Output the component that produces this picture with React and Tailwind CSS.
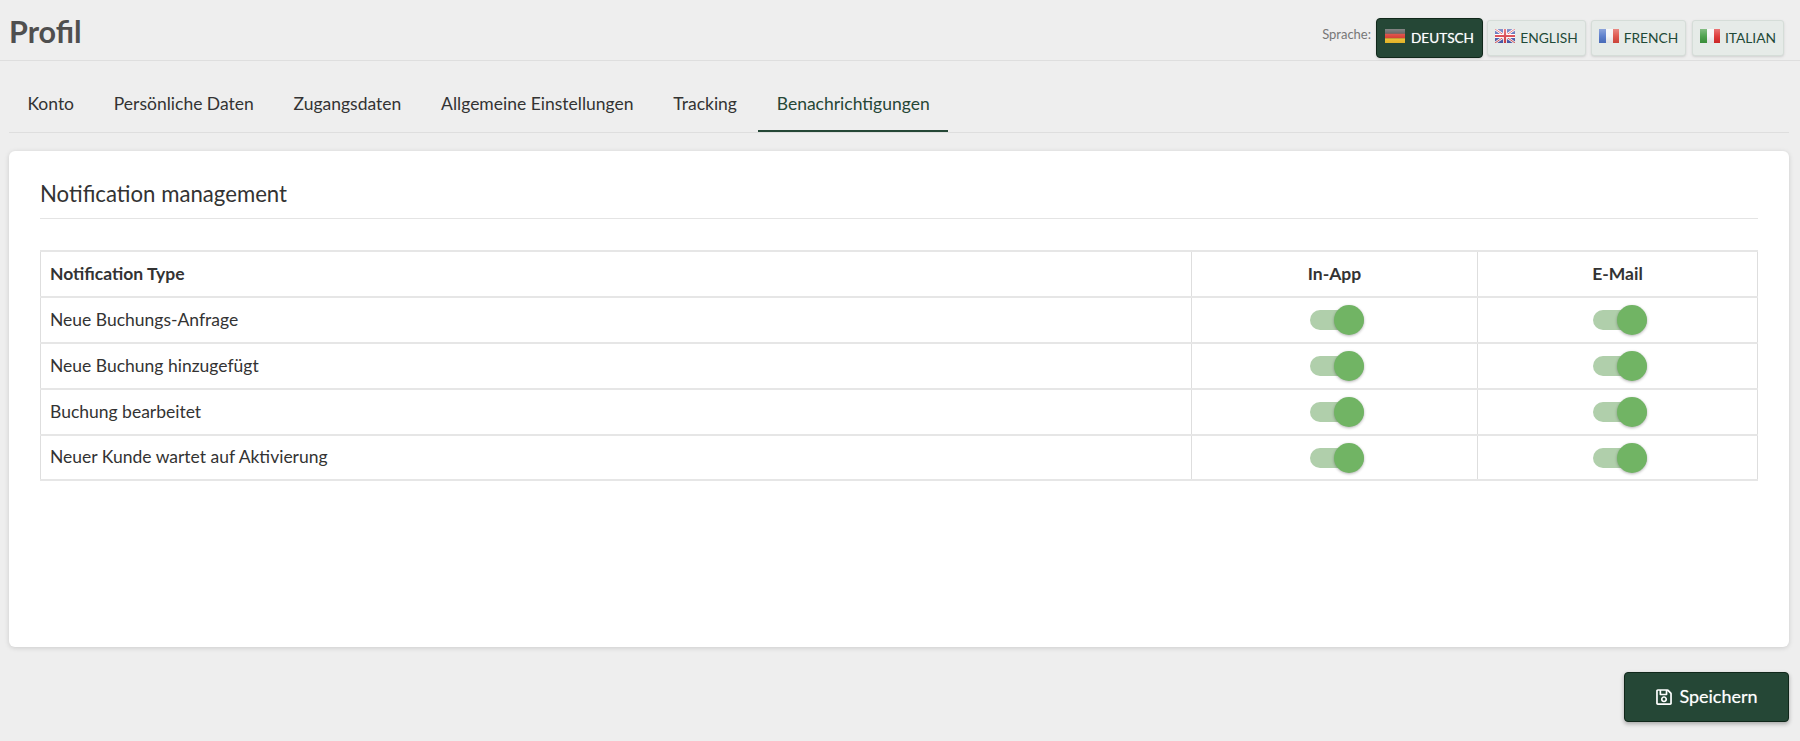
import React from "react";
import { FaRegSave } from "react-icons/fa";

const Gloss = ({ id }) => (
  <>
    <defs>
      <linearGradient id={id} x1="0" y1="0" x2="0" y2="1">
        <stop offset="0" stopColor="#fff" stopOpacity="0.35" />
        <stop offset="0.5" stopColor="#fff" stopOpacity="0.1" />
        <stop offset="1" stopColor="#000" stopOpacity="0.08" />
      </linearGradient>
    </defs>
    <rect width="20" height="14" fill={`url(#${id})`} />
  </>
);

const flagClass = "mt-[-4px] shrink-0 blur-[0.4px]";

const De = () => (
  <svg width="20" height="14" viewBox="0 0 20 14" className={flagClass}>
    <rect width="20" height="4.7" fill="#444" />
    <rect y="4.7" width="20" height="4.6" fill="#d8352c" />
    <rect y="9.3" width="20" height="4.7" fill="#f5c32c" />
    <Gloss id="g1" />
  </svg>
);
const En = () => (
  <svg width="20" height="14" viewBox="0 0 20 14" className={flagClass}>
    <rect width="20" height="14" fill="#4a5cb0" />
    <path d="M0 0L20 14M20 0L0 14" stroke="#fff" strokeWidth="2.6" />
    <path d="M0 0L20 14M20 0L0 14" stroke="#d8404a" strokeWidth="0.9" />
    <path d="M10 0V14M0 7H20" stroke="#fff" strokeWidth="4" />
    <path d="M10 0V14M0 7H20" stroke="#d8404a" strokeWidth="2.2" />
    <Gloss id="g2" />
  </svg>
);
const Fr = () => (
  <svg width="20" height="14" viewBox="0 0 20 14" className={flagClass}>
    <rect width="7" height="14" fill="#4f74c8" />
    <rect x="7" width="7" height="14" fill="#f4f4f6" />
    <rect x="14" width="6" height="14" fill="#dd4a40" />
    <Gloss id="g3" />
  </svg>
);
const It = () => (
  <svg width="20" height="14" viewBox="0 0 20 14" className={flagClass}>
    <rect width="7" height="14" fill="#3f9a3f" />
    <rect x="7" width="7" height="14" fill="#f4f4f6" />
    <rect x="14" width="6" height="14" fill="#dd2a2a" />
    <Gloss id="g4" />
  </svg>
);

const LangButton = ({ flag, label, active, w }) => (
  <button
    className={
      active
        ? "flex h-[40px] items-center justify-center gap-[6px] rounded-[4px] border border-[#10271a] bg-[#254736] text-[13.6px] text-white shadow-sm [text-shadow:0_0_1px_rgba(255,255,255,0.6)] " + w
        : "flex h-[36px] items-center justify-center gap-[5px] rounded-[3px] border border-[#d5ddd8] bg-[#e6ebe8] text-[13.8px] text-[#1f4a38] shadow-sm " + w
    }
  >
    {flag}
    <span className="mt-[1px]">{label}</span>
  </button>
);

const Toggle = () => (
  <div className="relative mx-auto h-[20px] w-[54px] translate-x-[2px] rounded-full bg-[#b0cfab]">
    <div className="absolute right-0 top-[-5px] h-[30px] w-[30px] rounded-full bg-[#71b464] shadow-[0_1px_3px_rgba(0,0,0,0.3)]" />
  </div>
);

const tabs = ["Konto", "Persönliche Daten", "Zugangsdaten", "Allgemeine Einstellungen", "Tracking", "Benachrichtigungen"];
const rows = ["Neue Buchungs-Anfrage", "Neue Buchung hinzugefügt", "Buchung bearbeitet", "Neuer Kunde wartet auf Aktivierung"];
const cell = "border-x border-y-2 border-x-[#dedede] border-y-[#e6e6e6]";

export default function App() {
  return (
    <div className="flex h-[741px] flex-col overflow-hidden bg-[#eeeeee] font-['Lato','Noto_Sans',sans-serif] text-[#333]">
      <header className="flex h-[61px] shrink-0 items-center justify-between border-b border-[#dedede] pl-[9px] pr-[16px]">
        <h1 className="pt-[3px] text-[30.5px] font-bold leading-none text-[#4f4f4f]">Profil</h1>
        <div className="flex items-center gap-[5px] pt-[15px]">
          <span className="mb-[6px] text-[13px] text-[#777]">Sprache:</span>
          <LangButton flag={<De />} label="DEUTSCH" active w="w-[107px]" />
          <LangButton flag={<En />} label="ENGLISH" w="-ml-[1px] w-[99px]" />
          <LangButton flag={<Fr />} label="FRENCH" w="w-[95px]" />
          <LangButton flag={<It />} label="ITALIAN" w="ml-[1px] w-[92px]" />
        </div>
      </header>

      <nav className="mx-[9px] mr-[11px] mt-[1px] flex h-[71px] shrink-0 items-stretch gap-[3px] border-b border-[#dedede] pt-[14px]">
        {tabs.map((t, i) => (
          <div
            key={t}
            className={
              i === 5
                ? "flex items-center border-b-2 border-[#254736] px-[18.4px] pt-[2px] text-[17.5px] text-[#254736]"
                : "flex items-center px-[18.4px] text-[17.5px] text-[#333]"
            }
          >
            {t}
          </div>
        ))}
      </nav>

      <main className="mx-[9px] mr-[11px] mt-[18px] h-[496px] shrink-0 rounded-[6px] bg-white px-[31px] pt-[25px] shadow-[0_1px_5px_rgba(0,0,0,0.15)]">
        <h2 className="border-b border-[#e4e4e4] pb-[6px] text-[22.2px] leading-[36px] text-[#333]">Notification management</h2>
        <table className="mt-[31px] w-full table-fixed border-collapse text-[17.5px]">
          <colgroup>
            <col className="w-[1151px]" />
            <col className="w-[286px]" />
            <col />
          </colgroup>
          <thead>
            <tr className="h-[46px]">
              <th className={cell + " px-[9px] text-left font-bold"}>Notification Type</th>
              <th className={cell + " text-center font-bold"}>In-App</th>
              <th className={cell + " text-center font-bold"}>E-Mail</th>
            </tr>
          </thead>
          <tbody>
            {rows.map((r, i) => (
              <tr key={r} className={i === 3 ? "h-[45px]" : "h-[46px]"}>
                <td className={cell + " px-[9px]"}>{r}</td>
                <td className={cell}><Toggle /></td>
                <td className={cell}><Toggle /></td>
              </tr>
            ))}
          </tbody>
        </table>
      </main>

      <div className="mr-[11px] mt-[25px] flex justify-end">
        <button className="flex h-[50px] w-[165px] items-center justify-center gap-[6px] rounded-[4px] border border-[#10271a] bg-[#254736] pb-[1px] text-[18px] text-white shadow-[0_2px_4px_rgba(0,0,0,0.3)] [text-shadow:0_0_1px_rgba(255,255,255,0.5)]">
          <FaRegSave size={18} />
          <span>Speichern</span>
        </button>
      </div>
    </div>
  );
}
